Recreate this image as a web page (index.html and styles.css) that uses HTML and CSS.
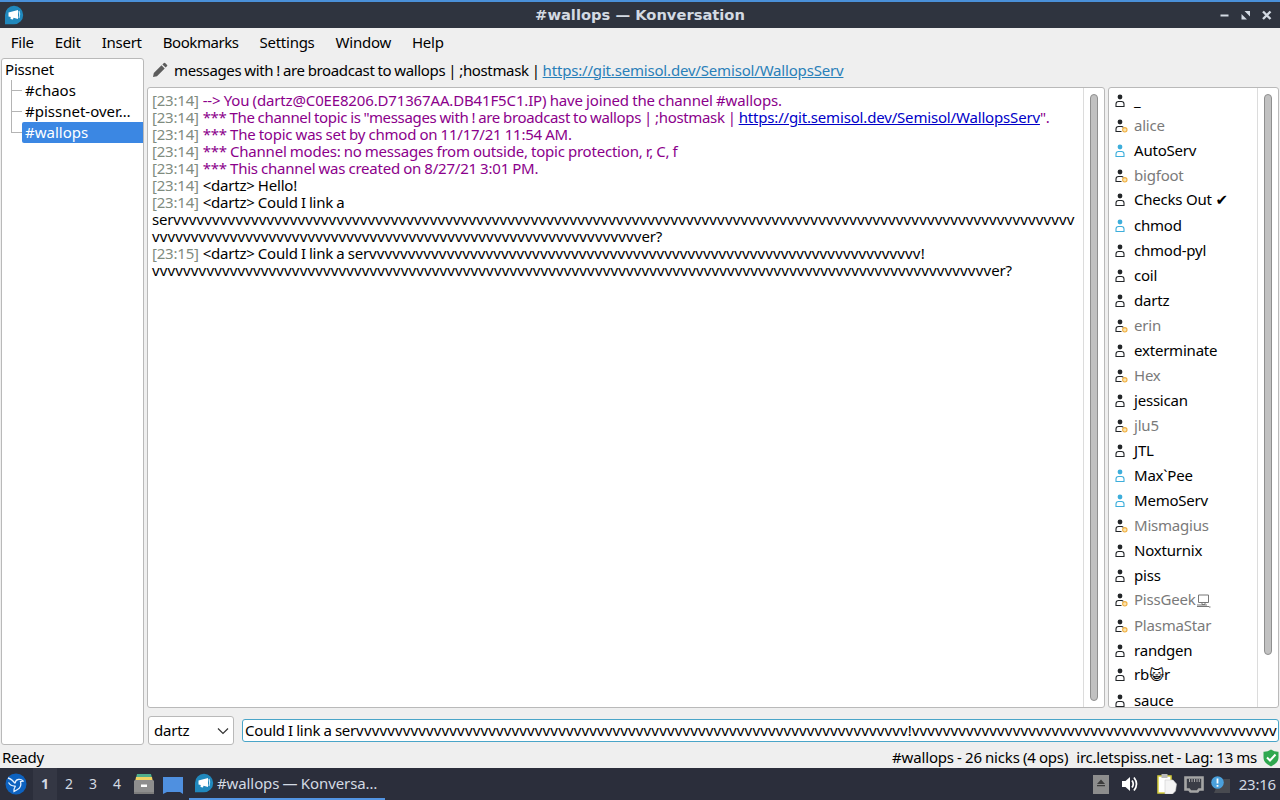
FILE: index.html
```html
<!DOCTYPE html>
<html lang="en">
<head>
    <meta charset="UTF-8">
    <title>#wallops — Konversation</title>
    <link rel="stylesheet" href="styles.css">
</head>
<body>
    <!-- shared icons -->
    <svg class="defs" width="0" height="0">
        <symbol id="user" viewBox="0 0 14 14">
            <circle cx="6" cy="3" r="2.4" fill="currentColor"/>
            <path d="M2 12.500v-2.400q0-2.600 2.600-2.600h2.800q2.600 0 2.600 2.600v2.400z" fill="none" stroke="currentColor" stroke-width="1.100"/>
        </symbol>
        <symbol id="user-away" viewBox="0 0 14 14">
            <circle cx="6" cy="3" r="2.4" fill="currentColor"/>
            <path d="M7.500 12.500H2v-2.400q0-2.600 2.600-2.600h2.800q1.400 0 2 1" fill="none" stroke="currentColor" stroke-width="1.100"/>
            <circle cx="10.8" cy="10.8" r="2.2" fill="#fbe3b0" stroke="#f0b040" stroke-width="1.1"/>
        </symbol>
        <symbol id="konversation" viewBox="0 0 20 20">
            <path d="M10 .8a9.200 9.200 0 1 1 0 18.400H1V10A9.200 9.200 0 0 1 10 .8z" fill="#2088bd"/>
            <path d="M4.500 7.500l9.500-2.500v9L9.500 12.800l-.5 1.800-2.500-.6.2-2-2.200-.5z" fill="#fff"/>
            <path d="M15 6q1.400 3.500 0 7" fill="none" stroke="#cfe8f5" stroke-width="1.200"/>
        </symbol>
    </svg>

    <div class="titlebar">
        <svg class="app-icon" width="20" height="20"><use href="#konversation"/></svg>
        <div class="title">#wallops — Konversation</div>
        <svg class="controls" width="54" height="12" viewBox="0 0 54 12">
            <path d="M1.500 6.500h8" stroke="#d3dae3" stroke-width="2"/>
            <path d="M25.500 2H31v5.500zM22.500 5v5.500H28z" fill="#d3dae3"/>
            <path d="M44 2.500l7.500 7.500M51.500 2.500L44 10" stroke="#d3dae3" stroke-width="2.400"/>
        </svg>
    </div>

    <div class="menubar">
        <span>File</span><span>Edit</span><span>Insert</span><span class="tight">Bookmarks</span><span>Settings</span><span>Window</span><span>Help</span>
    </div>

    <div class="main">
        <div class="tree">
            <div class="server"><span>Pissnet</span></div>
            <div class="channel"><span>#chaos</span></div>
            <div class="channel"><span>#pissnet-over…</span></div>
            <div class="channel last active"><span>#wallops</span></div>
        </div>

        <div class="content">
            <div class="topic">
                <svg width="16" height="16" viewBox="0 0 16 16">
                    <path d="M1 15l.8-4L9.500 3.300l3.200 3.200L5 14.200zM10.400 2.400l1.500-1.500q.6-.5 1.200 0l2 2q.5.6 0 1.200l-1.500 1.500z" fill="#5c5c5c"/>
                </svg>
                <span class="topic-text">messages with ! are broadcast to wallops | ;hostmask | <a>https://git.semisol.dev/Semisol/WallopsServ</a></span>
            </div>

            <div class="panes">
                <div class="chat">
                    <div class="log">
                        <p class="event join"><time>[23:14]</time> <span>--&gt; You (dartz@C0EE8206.D71367AA.DB41F5C1.IP) have joined the channel #wallops.</span></p>
                        <p class="event topic-event"><time>[23:14]</time> <span>*** The channel topic is "messages with ! are broadcast to wallops | ;hostmask | <a>https://git.semisol.dev/Semisol/WallopsServ</a>".</span></p>
                        <p class="event"><time>[23:14]</time> <span>*** The topic was set by chmod on 11/17/21 11:54 AM.</span></p>
                        <p class="event"><time>[23:14]</time> <span>*** Channel modes: no messages from outside, topic protection, r, C, f</span></p>
                        <p class="event"><time>[23:14]</time> <span>*** This channel was created on 8/27/21 3:01 PM.</span></p>
                        <p><time>[23:14]</time> <span>&lt;dartz&gt; Hello!</span></p>
                        <p><time>[23:14]</time> <span>&lt;dartz&gt; Could I link a</span><br><span>ser</span><span class="v">vvvvvvvvvvvvvvvvvvvvvvvvvvvvvvvvvvvvvvvvvvvvvvvvvvvvvvvvvvvvvvvvvvvvvvvvvvvvvvvvvvvvvvvvvvvvvvvvvvvvvvvvvvvvvvvvvvvv</span><br><span class="v">vvvvvvvvvvvvvvvvvvvvvvvvvvvvvvvvvvvvvvvvvvvvvvvvvvvvvvvvvvvvvvv</span><span>er?</span></p>
                        <p><time>[23:15]</time> <span>&lt;dartz&gt; Could I link a ser</span><span class="v">vvvvvvvvvvvvvvvvvvvvvvvvvvvvvvvvvvvvvvvvvvvvvvvvvvvvvvvvvvvvvvvvvvvvvvv</span>!<br><span class="v">vvvvvvvvvvvvvvvvvvvvvvvvvvvvvvvvvvvvvvvvvvvvvvvvvvvvvvvvvvvvvvvvvvvvvvvvvvvvvvvvvvvvvvvvvvvvvvvvvvvvvvvvvvvv</span><span>er?</span></p>
                    </div>
                    <div class="scroll"><div class="thumb"></div></div>
                </div>

                <div class="nicks">
                    <div class="nick-list">
                        <div class="nick"><svg><use href="#user"/></svg><span>_</span></div>
                        <div class="nick away"><svg><use href="#user-away"/></svg><span>alice</span></div>
                        <div class="nick op"><svg><use href="#user"/></svg><span>AutoServ</span></div>
                        <div class="nick away"><svg><use href="#user-away"/></svg><span>bigfoot</span></div>
                        <div class="nick up"><svg><use href="#user"/></svg><span>Checks Out ✔</span></div>
                        <div class="nick op"><svg><use href="#user"/></svg><span>chmod</span></div>
                        <div class="nick"><svg><use href="#user"/></svg><span>chmod-pyl</span></div>
                        <div class="nick"><svg><use href="#user"/></svg><span>coil</span></div>
                        <div class="nick"><svg><use href="#user"/></svg><span>dartz</span></div>
                        <div class="nick away"><svg><use href="#user-away"/></svg><span>erin</span></div>
                        <div class="nick"><svg><use href="#user"/></svg><span>exterminate</span></div>
                        <div class="nick away"><svg><use href="#user-away"/></svg><span>Hex</span></div>
                        <div class="nick"><svg><use href="#user"/></svg><span>jessican</span></div>
                        <div class="nick away"><svg><use href="#user-away"/></svg><span>jlu5</span></div>
                        <div class="nick"><svg><use href="#user"/></svg><span>JTL</span></div>
                        <div class="nick op"><svg><use href="#user"/></svg><span>Max`Pee</span></div>
                        <div class="nick op"><svg><use href="#user"/></svg><span>MemoServ</span></div>
                        <div class="nick away"><svg><use href="#user-away"/></svg><span>Mismagius</span></div>
                        <div class="nick"><svg><use href="#user"/></svg><span>Noxturnix</span></div>
                        <div class="nick"><svg><use href="#user"/></svg><span>piss</span></div>
                        <div class="nick away up"><svg><use href="#user-away"/></svg><span>PissGeek</span><svg class="pc" viewBox="0 0 15 14"><path d="M2.500 1h10v7.500h-10zM6 8.500v2h3v-2M1 12.500h12M1 11h10M13 13h1.500" fill="none" stroke="#777" stroke-width="1"/></svg></div>
                        <div class="nick away"><svg><use href="#user-away"/></svg><span>PlasmaStar</span></div>
                        <div class="nick"><svg><use href="#user"/></svg><span>randgen</span></div>
                        <div class="nick up"><svg><use href="#user"/></svg><span>rb<b>😺</b>r</span></div>
                        <div class="nick"><svg><use href="#user"/></svg><span>sauce</span></div>
                    </div>
                    <div class="scroll"><div class="thumb short"></div></div>
                </div>
            </div>

            <div class="entry">
                <div class="nick-select"><span>dartz</span>
                    <svg width="12" height="8" viewBox="0 0 12 8"><path d="M1 1.500l5 5 5-5" fill="none" stroke="#333" stroke-width="1.200"/></svg>
                </div>
                <div class="line-edit"><span>Could I link a ser</span><span class="v">vvvvvvvvvvvvvvvvvvvvvvvvvvvvvvvvvvvvvvvvvvvvvvvvvvvvvvvvvvvvvvvvvvvvvvv</span>!<span class="v">vvvvvvvvvvvvvvvvvvvvvvvvvvvvvvvvvvvvvvvvvvvvvvv</span></div>
            </div>
        </div>
    </div>

    <div class="statusbar">
        <span class="ready">Ready</span>
        <span class="info">#wallops - 26 nicks (4 ops)</span>
        <span class="lag">irc.letspiss.net - Lag: 13 ms</span>
        <svg width="16" height="18" viewBox="0 0 16 18">
            <path d="M8 .5q3.500 2.400 7.500 2.200v5.800Q15.500 14 8 17.500.5 14 .5 8.500V2.700Q4.500 2.900 8 .5z" fill="#2fa84f"/>
            <path d="M4 8.500l3 3 5.500-6" fill="none" stroke="#fff" stroke-width="2"/>
        </svg>
    </div>

    <div class="taskbar">
        <svg class="start" width="22" height="22" viewBox="0 0 22 22">
            <circle cx="11" cy="11" r="10.500" fill="#0d62c0"/>
            <path d="M3 5q4 1 7 5.500M3.500 9.500Q6 13.500 10.500 13M10 10.500Q10.500 7 13 6.500q3-.8 5 1.500l-2.500.5q1.500 5.500-3 8L9 18.500q-.5-2.500 1.500-5.500" fill="none" stroke="#e6f1ff" stroke-width="1.300"/>
        </svg>
        <div class="desktops"><span class="current">1</span><span>2</span><span>3</span><span>4</span></div>
        <svg class="files" width="20" height="20" viewBox="0 0 20 20">
            <path d="M3 0h14l1 4H2z" fill="#4fae8c"/>
            <path d="M2 3h16l1 5H1z" fill="#f0d264"/>
            <path d="M1 6h18l1 1v13H0V7z" fill="#8e8e8e"/>
            <path d="M7 10.500h6v2.500H7z" fill="#fff"/>
            <path d="M0 18h20v2H0z" fill="#7d7d7d"/>
        </svg>
        <svg class="show-desktop" width="20" height="17" viewBox="0 0 20 17">
            <path d="M0 0h20v17l-3-2H4l-4 2z" fill="#4f90e0"/>
        </svg>
        <div class="task">
            <svg width="20" height="20"><use href="#konversation"/></svg>
            <span>#wallops — Konversa…</span>
        </div>
        <div class="tray">
            <svg width="16" height="19" viewBox="0 0 16 19">
                <path d="M0 0h16v19H0z" fill="#8d8d8d"/>
                <path d="M8 4.500l4 4.500H4zM4 10h8v1.200H4z" fill="#3c3c3c"/>
            </svg>
            <svg class="volume" width="18" height="16" viewBox="0 0 18 16">
                <path d="M1 5h3.500L9 1v14l-4.500-4H1z" fill="#fff"/>
                <path d="M11 4.500q2.500 3.500 0 7M13 1.500q5 6.500 0 13" fill="none" stroke="#fff" stroke-width="1.700"/>
            </svg>
            <svg class="clip" width="20" height="20" viewBox="0 0 20 20">
                <path d="M1 2h13v17H1z" fill="#fff" stroke="#d8cf3c" stroke-width="1.500"/>
                <path d="M4.500 0h6v4h-6z" fill="#b9b9b9"/>
                <path d="M8 6h8l3.500 4-1 7-3 3H8z" fill="#f4f4f4" stroke="#cfcfcf" stroke-width=".6"/>
            </svg>
            <svg class="net" width="20" height="17" viewBox="0 0 20 17">
                <path d="M1.500 1.500h17v12H15L13.500 15.500h-7L5 13.500H1.500z" fill="#3a3d46" stroke="#a5a5a5" stroke-width="2.600"/>
                <path d="M5.500 3v3M8 3v3M10.500 3v3M13 3v3M15.300 3v3" stroke="#a5a5a5"/>
            </svg>
            <svg class="notify" width="19" height="17" viewBox="0 0 19 17">
                <path d="M9 3h10v14H3z" fill="#484a50"/>
                <circle cx="6.500" cy="6.500" r="6.300" fill="#4aa0dc"/>
                <path d="M6.500 2.500v5M6.500 9v1.800" stroke="#fff" stroke-width="1.800"/>
            </svg>
            <span class="clock">23:16</span>
        </div>
    </div>
</body>
</html>
```
FILE: styles.css
```css
* {
    box-sizing: border-box;
}

body {
    margin: 0;
    width: 1280px;
    height: 800px;
    overflow: hidden;
    display: flex;
    flex-direction: column;
    background: #efefef;
    color: #000;
    font-family: "Noto Sans", "DejaVu Sans", sans-serif;
    font-size: 15px;
    line-height: 21px;
    letter-spacing: -0.21px;
    word-spacing: -0.5px;
    white-space: nowrap;
}

svg {
    display: block;
    flex: none;
}

.defs {
    position: absolute;
}

/* Window title */
.titlebar {
    height: 28px;
    flex: none;
    border-top: 2px solid #4a90d9;
    background: #2f343f;
    display: flex;
    align-items: center;
    padding: 0 7px 0 4px;
}

.title {
    flex: 1;
    text-align: center;
    padding-left: 37px;
    font: bold 14.7px/26px "DejaVu Sans", sans-serif;
    letter-spacing: 0;
    word-spacing: 0;
    color: #d3dae3;
}

.menubar {
    height: 30px;
    flex: none;
    display: flex;
    align-items: center;
    gap: 21px;
    padding: 0 0 2px 10.8px;
    letter-spacing: -0.25px;
}

.menubar .tight {
    letter-spacing: -0.45px;
}

.main {
    height: 687px;
    flex: none;
    display: flex;
    gap: 3px;
    padding: 0 1px;
}

/* Channel tree */
.tree {
    width: 143px;
    background: #fff;
    border: 1px solid #b9b9b9;
    border-radius: 3px;
    letter-spacing: 0;
}

.server {
    height: 21px;
    padding-left: 3px;
    letter-spacing: -0.2px;
}

.channel {
    height: 21px;
    margin-left: 9px;
    display: flex;
    align-items: center;
    background: linear-gradient(#b4b4b4, #b4b4b4) 0 0 / 1px 100% no-repeat;
}

.channel.last {
    background-size: 1px 11px;
}

.channel::before {
    content: "";
    width: 11px;
    height: 1px;
    background: #b4b4b4;
}

.channel span {
    flex: 1;
    padding-left: 3px;
}

.channel.active span {
    background: #3b87e3;
    color: #fff;
    border-radius: 2px 0 0 2px;
}

.content {
    flex: 1;
    min-width: 0;
    display: flex;
    flex-direction: column;
}

.topic {
    height: 29px;
    display: flex;
    align-items: center;
    padding: 0 0 5px 5px;
    gap: 6px;
    letter-spacing: -0.36px;
}

.topic a {
    color: #2980b9;
    text-decoration: underline;
    letter-spacing: -0.18px;
}

.panes {
    height: 621px;
    display: flex;
    gap: 3px;
}

.chat,
.nicks {
    display: flex;
    background: #fff;
    border: 1px solid #b9b9b9;
    border-radius: 3px;
    overflow: hidden;
}

.chat {
    width: 958px;
}

.nicks {
    width: 171px;
}

/* Message log */
.log {
    flex: 1;
    min-width: 0;
    padding: 4px 0 0 4px;
    line-height: 17px;
}

.log p {
    margin: 0;
}

.log time {
    color: #7f8c7f;
    margin-right: 0.7px;
}

.event {
    color: #8b008b;
}

.join span {
    letter-spacing: -0.15px;
}

.topic-event span {
    letter-spacing: -0.34px;
}

.event a {
    color: #0000c8;
    text-decoration: underline;
    letter-spacing: -0.17px;
}

.v {
    letter-spacing: 0.15px;
}

.scroll {
    width: 21px;
    flex: none;
    border-left: 1px solid #dcdcdc;
    padding: 6px 0 6px 6px;
}

.thumb {
    width: 8px;
    height: 100%;
    border: 1px solid #8f8f8f;
    border-radius: 4px;
    background: #c1c1c1;
}

.thumb.short {
    height: 561px;
}

/* Nick list */
.nick-list {
    flex: 1;
    overflow: hidden;
    word-spacing: 0;
}

.nick {
    height: 25px;
    display: flex;
    align-items: center;
    padding-left: 5px;
}

.nick svg {
    width: 14px;
    height: 14px;
    margin-right: 6px;
    color: #232629;
}

.nick.op svg {
    color: #3daedb;
}

.nick.away {
    color: #7a7a7a;
}

.nick.up {
    padding-bottom: 2px;
}

.nick b {
    font: 14.5px/16px "DejaVu Sans", sans-serif;
}

.nick svg.pc {
    width: 15px;
    height: 14px;
    margin: 3px 0 0;
}

/* Input row */
.entry {
    flex: 1;
    display: flex;
    align-items: center;
    gap: 8px;
    padding: 8px 0 0 1px;
}

.nick-select {
    width: 86px;
    height: 29px;
    background: #fff;
    border: 1px solid #b9b9b9;
    border-radius: 3px;
    display: flex;
    align-items: center;
    justify-content: space-between;
    padding: 0 4px 0 5px;
}

.line-edit {
    flex: 1;
    min-width: 0;
    height: 23px;
    background: #fff;
    border: 1px solid #4aa5c8;
    border-radius: 3px;
    padding-left: 2px;
    overflow: hidden;
}

.statusbar {
    height: 23px;
    flex: none;
    display: flex;
    align-items: center;
    padding: 2px 1px 0 2px;
}

.info {
    margin-left: auto;
    letter-spacing: -0.17px;
}

.lag {
    margin: 0 6px 0 8px;
}

/* Desktop panel */
.taskbar {
    flex: 1;
    background: #2b2e3b;
    color: #d3dae3;
    display: flex;
    align-items: center;
}

.start {
    margin: 0 6px 0 5px;
}

.desktops {
    display: flex;
    font-size: 14px;
}

.desktops span {
    width: 24px;
    text-align: center;
    line-height: 32px;
}

.desktops .current {
    background: #343744;
    font-weight: bold;
}

.files {
    margin-left: 5px;
}

.show-desktop {
    margin: 2px 6px 0 9px;
}

.task {
    width: 196px;
    height: 32px;
    display: flex;
    align-items: center;
    gap: 3px;
    padding-left: 5px;
    border-bottom: 2px solid #5294e2;
    letter-spacing: -0.1px;
}

.tray {
    margin-left: auto;
    display: flex;
    align-items: center;
    padding-right: 4px;
}

.volume { margin-left: 12px; }
.clip { margin-left: 18px; }
.net { margin-left: 7px; }
.notify { margin: 0 9px 0 7px; }
```
